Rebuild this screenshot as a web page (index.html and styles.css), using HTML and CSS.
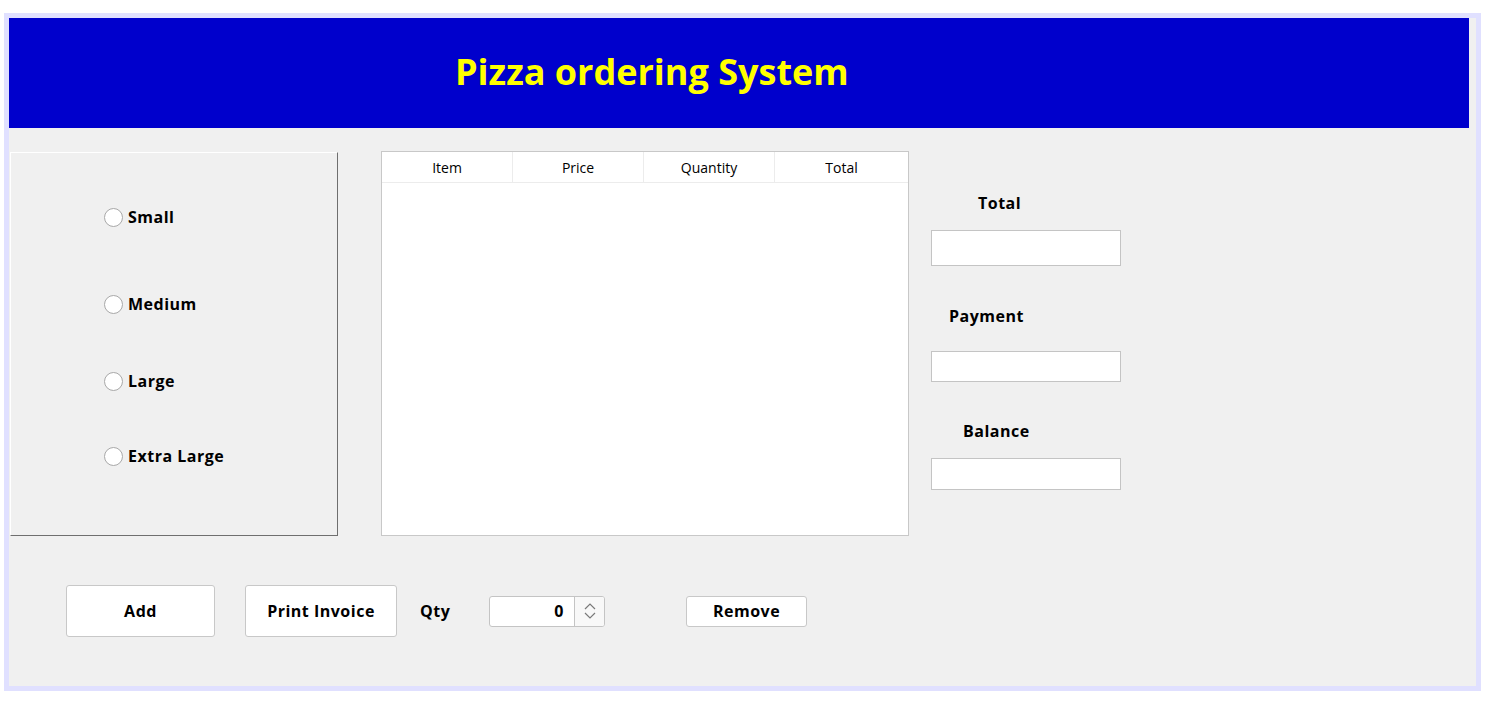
FILE: index.html
```html
<!DOCTYPE html>
<html>
<head>
<meta charset="utf-8">
<title>Pizza ordering System</title>
<link rel="stylesheet" href="styles.css">
</head>
<body>
<div class="frame">
  <div class="header">
    <h1 class="title">Pizza ordering System</h1>
  </div>
  <div class="main">
    <div class="size-panel">
      <label class="radio r1"><span class="dot"></span><span class="rlabel">Small</span></label>
      <label class="radio r2"><span class="dot"></span><span class="rlabel">Medium</span></label>
      <label class="radio r3"><span class="dot"></span><span class="rlabel">Large</span></label>
      <label class="radio r4"><span class="dot"></span><span class="rlabel">Extra Large</span></label>
    </div>
    <div class="table">
      <div class="thead">
        <div class="th">Item</div>
        <div class="th">Price</div>
        <div class="th">Quantity</div>
        <div class="th last">Total</div>
      </div>
    </div>
    <div class="summary">
      <div class="slabel l-total">Total</div>
      <div class="sinput i-total"></div>
      <div class="slabel l-pay">Payment</div>
      <div class="sinput i-pay"></div>
      <div class="slabel l-bal">Balance</div>
      <div class="sinput i-bal"></div>
    </div>
  </div>
  <div class="actions">
    <button class="btn btn-add">Add</button>
    <button class="btn btn-print">Print Invoice</button>
    <span class="qty-label">Qty</span>
    <div class="spinner">
      <div class="spin-value">0</div>
      <div class="spin-btns">
        <svg width="12" height="8" viewBox="0 0 12 8"><path d="M1 7 L6 2 L11 7" fill="none" stroke="#7a7a7a" stroke-width="1.2"/></svg>
        <svg width="12" height="8" viewBox="0 0 12 8"><path d="M1 1 L6 6 L11 1" fill="none" stroke="#7a7a7a" stroke-width="1.2"/></svg>
      </div>
    </div>
    <button class="btn btn-remove">Remove</button>
  </div>
</div>
</body>
</html>
```

FILE: styles.css
```css
* { box-sizing: border-box; }

html, body {
  margin: 0;
  padding: 0;
  background: #ffffff;
}

body {
  font-family: "Open Sans", "Noto Sans", "Liberation Sans", sans-serif;
  color: #000;
}

.frame {
  margin: 13px 0 0 4px;
  width: 1477px;
  height: 678px;
  border: 5px solid #e0e0ff;
  background: #f0f0f0;
  display: flex;
  flex-direction: column;
}

.header {
  width: 1460px;
  height: 110px;
  background: #0000cc;
  display: flex;
  align-items: center;
  padding-left: 446px;
}

.title {
  margin: 0;
  color: #ffff00;
  font-size: 36px;
  font-weight: 700;
  letter-spacing: 0;
  line-height: 1;
  margin-top: -2px;
}

.main {
  display: flex;
  align-items: flex-start;
  height: 408px;
}

.size-panel {
  margin: 24px 0 0 1px;
  width: 328px;
  height: 384px;
  border: 1px solid;
  border-color: #ffffff #6f6f6f #6f6f6f #ffffff;
  display: flex;
  flex-direction: column;
  padding-left: 93px;
}

.radio {
  display: flex;
  align-items: center;
  height: 20px;
  gap: 5px;
}

.r1 { margin-top: 54px; }
.r2 { margin-top: 67px; }
.r3 { margin-top: 57px; }
.r4 { margin-top: 55px; }

.dot {
  width: 19px;
  height: 19px;
  border-radius: 50%;
  border: 1px solid #a8a8a8;
  background: #ffffff;
}

.rlabel,
.slabel,
.btn,
.qty-label,
.spin-value {
  font-size: 16px;
  font-weight: 700;
  letter-spacing: 0.5px;
}

.table {
  margin: 23px 0 0 43px;
  width: 528px;
  height: 385px;
  border: 1px solid #c8c8c8;
  background: #ffffff;
}

.thead {
  display: grid;
  grid-template-columns: 131px 131px 131px 1fr;
  height: 31px;
  border-bottom: 1px solid #ececec;
}

.th {
  display: flex;
  align-items: center;
  justify-content: center;
  font-size: 14px;
  border-right: 1px solid #ececec;
}

.th.last { border-right: none; }

.summary {
  margin: 65px 0 0 22px;
  width: 190px;
  display: flex;
  flex-direction: column;
}

.slabel {
  height: 20px;
  line-height: 20px;
  white-space: nowrap;
}

.sinput {
  width: 190px;
  border: 1px solid #c4c4c4;
  background: #ffffff;
}

.l-total { margin-left: 47px; }
.i-total { margin-top: 17px; height: 36px; }
.l-pay { margin-left: 18px; margin-top: 40px; }
.i-pay { margin-top: 25px; height: 31px; }
.l-bal { margin-left: 32px; margin-top: 39px; }
.i-bal { margin-top: 17px; height: 32px; }

.actions {
  display: flex;
  align-items: center;
  padding-left: 57px;
  margin-top: 49px;
  height: 52px;
}

.btn {
  font-family: inherit;
  color: #000;
  background: #ffffff;
  border: 1px solid #c8c8c8;
  border-radius: 3px;
  padding: 0;
}

.btn-add { width: 149px; height: 52px; }
.btn-print { width: 152px; height: 52px; margin-left: 30px; }

.qty-label {
  margin-left: 23px;
  width: 69px;
}

.spinner {
  width: 116px;
  height: 31px;
  border: 1px solid #c4c4c4;
  border-radius: 3px;
  background: #ffffff;
  display: flex;
  overflow: hidden;
}

.spin-value {
  width: 85px;
  border-right: 1px solid #c4c4c4;
  text-align: right;
  padding-right: 10px;
  line-height: 29px;
}

.spin-btns {
  flex: 1;
  background: #f8f8f8;
  display: flex;
  flex-direction: column;
  align-items: center;
  justify-content: center;
  gap: 2px;
}

.spin-btns svg { display: block; }

.btn-remove {
  width: 121px;
  height: 31px;
  margin-left: 81px;
}
```
